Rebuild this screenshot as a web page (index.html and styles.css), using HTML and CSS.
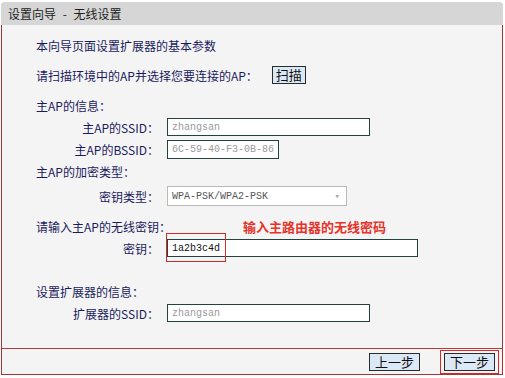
FILE: index.html
```html
<!DOCTYPE html>
<html lang="zh-CN">
<head>
    <meta charset="UTF-8">
    <title>设置向导 - 无线设置</title>
    <link rel="stylesheet" href="styles.css">
</head>
<body>
    <div class="panel">
        <div class="title">设置向导 - 无线设置</div>
        <div class="content">
            <div class="row head first">本向导页面设置扩展器的基本参数</div>
            <div class="row head gap">
                <span>请扫描环境中的AP并选择您要连接的AP：</span>
                <button class="btn scan">扫描</button>
            </div>
            <div class="row head gap">主AP的信息：</div>
            <div class="row field">
                <label>主AP的SSID：</label>
                <input class="box w-ssid" type="text" value="zhangsan" disabled>
            </div>
            <div class="row field">
                <label>主AP的BSSID：</label>
                <input class="box w-bssid" type="text" value="6C-59-40-F3-0B-86" disabled>
            </div>
            <div class="row head">主AP的加密类型：</div>
            <div class="row field mid">
                <label>密钥类型：</label>
                <div class="select">
                    <span>WPA-PSK/WPA2-PSK</span>
                    <span class="arrow">&#9662;</span>
                </div>
            </div>
            <div class="row head gap">
                <span>请输入主AP的无线密钥：</span>
                <span class="note">输入主路由器的无线密码</span>
            </div>
            <div class="row field">
                <label>密钥：</label>
                <div class="key-wrap">
                    <input class="box w-key dark" type="text" value="1a2b3c4d">
                    <div class="mark"></div>
                </div>
            </div>
            <div class="row head big">设置扩展器的信息：</div>
            <div class="row field">
                <label>扩展器的SSID：</label>
                <input class="box w-ssid" type="text" value="zhangsan">
            </div>
        </div>
        <div class="footer">
            <button class="btn step">上一步</button>
            <div class="highlight">
                <button class="btn step">下一步</button>
            </div>
        </div>
    </div>
</body>
</html>
```

FILE: styles.css
```css
body {
    margin: 0;
    background-color: #ffffff;
    font-family: "Noto Sans CJK SC", "Liberation Sans", sans-serif;
    font-size: 12px;
    color: #1b1b5c;
}

.panel {
    width: 502px;
    margin: 2px 0 0 1px;
}

.title {
    height: 23px;
    line-height: 23px;
    padding-left: 7px;
    background-color: #d6d6d6;
    border-radius: 4px 4px 0 0;
    color: #222222;
    font-size: 12px;
    word-spacing: 4px;
}

.content {
    height: 323px;
    box-sizing: border-box;
    padding-top: 10px;
    background-color: #f4f4f4;
    border-left: 1px solid #a83434;
    border-right: 1px solid #a83434;
}

.row {
    height: 20px;
    display: flex;
    align-items: center;
    margin-top: 2px;
}

.row.first {
    margin-top: 0;
}

.row.gap {
    margin-top: 10px;
}

.row.mid {
    margin-top: 5px;
}

.row.big {
    margin-top: 23px;
}

.row.head {
    padding-left: 34px;
}

.row.field label {
    width: 157px;
    text-align: right;
    margin-right: 8px;
}

.btn {
    font-family: "Noto Sans CJK SC", sans-serif;
    font-size: 13px;
    color: #111111;
    background-color: #dbe8f5;
    border: 1px solid #2a2a2a;
    padding: 0;
    height: 18px;
    line-height: 16px;
}

.scan {
    width: 34px;
    margin-left: 14px;
}

.box {
    height: 18px;
    box-sizing: border-box;
    padding: 0 4px;
    border: 1px solid #24413f;
    background-color: #ffffff;
    font-family: "Liberation Mono", monospace;
    font-size: 10px;
    color: #9a9a9a;
}

.box.dark {
    color: #111111;
}

.w-ssid {
    width: 203px;
}

.w-bssid {
    width: 112px;
    height: 19px;
}

.w-key {
    width: 251px;
}

.select {
    width: 180px;
    height: 20px;
    box-sizing: border-box;
    padding: 0 6px 0 4px;
    display: flex;
    align-items: center;
    justify-content: space-between;
    border: 1px solid #b9b9b9;
    background-color: #ffffff;
    font-family: "Liberation Mono", monospace;
    font-size: 10px;
    color: #555555;
}

.select .arrow {
    font-size: 9px;
    color: #aaaaaa;
}

.note {
    margin-left: 72px;
    color: #e5332a;
    font-weight: bold;
    font-size: 13px;
}

.key-wrap {
    position: relative;
}

.key-wrap .box {
    display: block;
}

.mark {
    position: absolute;
    left: -1px;
    top: -6px;
    width: 58px;
    height: 27px;
    border: 1px solid #d42a2a;
}

.footer {
    height: 27px;
    box-sizing: border-box;
    display: flex;
    align-items: center;
    justify-content: flex-end;
    padding-right: 3px;
    background-color: #f4f4f4;
    border: 1px solid #a83434;
    border-top: 1px solid #b83838;
}

.step {
    width: 51px;
}

.highlight {
    margin-left: 20px;
    padding: 2px 3px;
    border: 1px solid #d42a2a;
    display: flex;
}
```
